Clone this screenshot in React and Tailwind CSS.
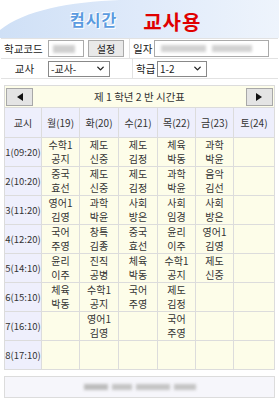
import React from "react";
import { ChevronDown } from "lucide-react";

const F = { fontFamily: '"Noto Sans CJK KR", "Noto Sans", sans-serif' };

const days = ["월(19)", "화(20)", "수(21)", "목(22)", "금(23)", "토(24)"];
const periods = ["1(09:20)", "2(10:20)", "3(11:20)", "4(12:20)", "5(14:10)", "6(15:10)", "7(16:10)", "8(17:10)"];
const data = [
  [["수학1", "공지"], ["제도", "신중"], ["제도", "김정"], ["체육", "박동"], ["과학", "박윤"], null],
  [["중국", "효선"], ["제도", "신중"], ["제도", "김정"], ["과학", "박윤"], ["음악", "김선"], null],
  [["영어1", "김영"], ["과학", "박윤"], ["사회", "방은"], ["사회", "임경"], ["사회", "방은"], null],
  [["국어", "주영"], ["창특", "김종"], ["중국", "효선"], ["윤리", "이주"], ["영어1", "김영"], null],
  [["윤리", "이주"], ["진직", "공병"], ["체육", "박동"], ["수학1", "공지"], ["제도", "신중"], null],
  [["체육", "박동"], ["수학1", "공지"], ["국어", "주영"], ["제도", "김정"], null, null],
  [null, ["영어1", "김영"], null, ["국어", "주영"], null, null],
  [null, null, null, null, null, null],
];

function Header() {
  return (
    <div className="relative h-[38px] overflow-hidden bg-gradient-to-r from-[#cfe0f6] via-[#dfeafa] to-[#eef4fc]">
      <svg className="absolute left-0 top-0" width="279" height="38" viewBox="0 0 279 38">
        <path d="M0 0 H120 C70 2 25 10 0 30 Z" fill="#ffffff" />
      </svg>
      <div className="relative flex h-full items-center">
        <span
          className="ml-[70px] text-[16px] font-bold text-[#5b9be0] tracking-[1px]"
          style={{ ...F, textShadow: "1px 1px 0 #ffffff, -1px -1px 0 #ffffff" }}
        >
          컴시간
        </span>
        <span className="ml-[26px] mt-[6px] text-[20px] font-bold text-[#e00000] tracking-[1px]" style={F}>
          교사용
        </span>
      </div>
    </div>
  );
}

function Form() {
  return (
    <div className="mx-[1px] border-y border-[#e2e2e2] text-[10.5px] text-[#222]" style={F}>
      <div className="flex h-[20px] items-center border-b border-[#e2e2e2]">
        <div className="w-[47px] pl-[3px]">학교코드</div>
        <div className="flex h-[17px] w-[36px] items-center border border-[#aaa] bg-white px-[4px]">
          <span className="block h-[8px] w-[22px] bg-[#cfcfcf] blur-[1.5px]" />
        </div>
        <div className="ml-[4px] flex h-[17px] w-[36px] items-center justify-center border border-[#aaa] bg-[#e9e9e9] text-[10px]">
          설정
        </div>
        <div className="ml-[5px] h-full w-px bg-[#e2e2e2]" />
        <div className="w-[24px] pl-[3px]">일자</div>
        <div className="flex h-[17px] w-[115px] items-center gap-[6px] border border-[#aaa] bg-white px-[6px]">
          <span className="block h-[7px] w-[45px] bg-[#d2d2d2] blur-[1.5px]" />
          <span className="block h-[7px] w-[40px] bg-[#d2d2d2] blur-[1.5px]" />
        </div>
      </div>
      <div className="flex h-[19px] items-center">
        <div className="w-[47px] text-center">교사</div>
        <div className="flex h-[16px] w-[62px] items-center justify-between border border-[#888] bg-white pl-[2px] pr-[3px] text-[10px]">
          <span>-교사-</span>
          <ChevronDown size={11} strokeWidth={3} />
        </div>
        <div className="ml-[22px] h-full w-px bg-[#e2e2e2]" />
        <div className="w-[24px] pl-[3px]">학급</div>
        <div className="flex h-[16px] w-[50px] items-center justify-between border border-[#888] bg-white pl-[2px] pr-[3px] text-[10px]">
          <span>1-2</span>
          <ChevronDown size={11} strokeWidth={3} />
        </div>
      </div>
    </div>
  );
}

function Arrow({ dir }) {
  return (
    <div className="flex h-[18px] w-[27px] items-center justify-center border border-[#a8a8a8] bg-[#e4e4e4]">
      <svg width="6" height="8" viewBox="0 0 6 8">
        {dir === "l" ? <path d="M6 0 L0 4 L6 8 Z" fill="#111" /> : <path d="M0 0 L6 4 L0 8 Z" fill="#111" />}
      </svg>
    </div>
  );
}

function Table() {
  const cols = "grid grid-cols-[37px_38px_39px_39px_38px_38px_1fr]";
  return (
    <div className="mx-[4px] text-[#333]" style={F}>
      <div className="flex h-[23px] items-center justify-between border border-[#dcdcdc] bg-[#fdfde9] px-[1px] text-[10.5px]">
        <Arrow dir="l" />
        <span>제 1 학년 2 반 시간표</span>
        <Arrow dir="r" />
      </div>
      <div className={`${cols} h-[30px] border-x border-b border-[#dcdcdc] bg-[#eeeffc] text-[10px]`}>
        <div className="flex items-center justify-center border-r border-[#dcdcdc]">교시</div>
        {days.map((d, i) => (
          <div key={d} className={`flex items-center justify-center ${i < 5 ? "border-r border-[#dcdcdc]" : ""}`}>
            {d}
          </div>
        ))}
      </div>
      {periods.map((p, r) => (
        <div key={p} className={`${cols} h-[29px] border-x border-b border-[#dcdcdc] bg-[#fdfde9] text-[10px]`}>
          <div className="flex items-center justify-center border-r border-[#dcdcdc] bg-[#eeeffc] text-[9.5px]">{p}</div>
          {data[r].map((c, i) => (
            <div
              key={i}
              className={`flex flex-col items-center justify-center leading-[14px] ${i < 5 ? "border-r border-[#dcdcdc]" : ""}`}
            >
              {c && (
                <>
                  <span className="block h-[14px]">{c[0]}</span>
                  <span className="block h-[14px]">{c[1]}</span>
                </>
              )}
            </div>
          ))}
        </div>
      ))}
    </div>
  );
}

export default function App() {
  return (
    <div className="h-[399px] w-[279px] overflow-hidden bg-white">
      <Header />
      <Form />
      <div className="h-[6px]" />
      <Table />
      <div className="mx-[4px] mt-[6px] flex h-[22px] items-center justify-center gap-[4px] border border-[#dcdcdc] bg-[#f6f6fb]">
        <span className="block h-[6px] w-[24px] bg-[#bcbcbc] blur-[1.5px]" />
        <span className="block h-[6px] w-[20px] bg-[#c4c4c4] blur-[1.5px]" />
        <span className="block h-[6px] w-[34px] bg-[#c4c4c4] blur-[1.5px]" />
        <span className="block h-[6px] w-[22px] bg-[#c4c4c4] blur-[1.5px]" />
      </div>
    </div>
  );
}
